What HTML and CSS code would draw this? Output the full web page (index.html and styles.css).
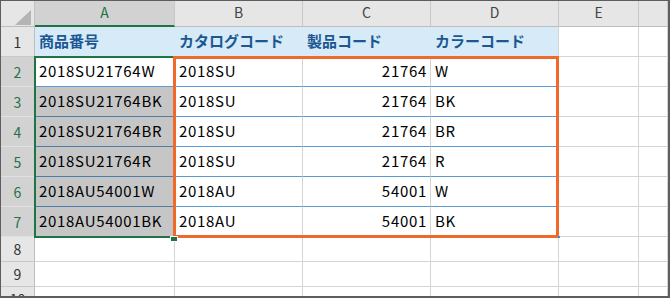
FILE: index.html
```html
<!DOCTYPE html>
<html lang="ja">
<head>
<meta charset="utf-8">
<title>商品番号</title>
<link rel="stylesheet" href="styles.css">
</head>
<body>
<div class="sheet">
  <div class="grid">
    <!-- column headers -->
    <div class="corner">
      <svg class="corner-tri" width="17" height="16" viewBox="0 0 17 16"><polygon points="16,0 16,15 0,15" fill="#b4b4b4"/></svg>
    </div>
    <div class="ch sel">A</div>
    <div class="ch">B</div>
    <div class="ch">C</div>
    <div class="ch">D</div>
    <div class="ch">E</div>
    <div class="ch"></div>

    <!-- row 1: table header -->
    <div class="rh">1</div>
    <div class="cell th">商品番号</div>
    <div class="cell th">カタログコード</div>
    <div class="cell th">製品コード</div>
    <div class="cell th th-end">カラーコード</div>
    <div class="cell"></div>
    <div class="cell"></div>

    <div class="rh sel">2</div>
    <div class="cell tb active">2018SU21764W</div>
    <div class="cell tb">2018SU</div>
    <div class="cell tb num">21764</div>
    <div class="cell tb">W</div>
    <div class="cell"></div>
    <div class="cell"></div>

    <div class="rh sel">3</div>
    <div class="cell tb hl">2018SU21764BK</div>
    <div class="cell tb">2018SU</div>
    <div class="cell tb num">21764</div>
    <div class="cell tb">BK</div>
    <div class="cell"></div>
    <div class="cell"></div>

    <div class="rh sel">4</div>
    <div class="cell tb hl">2018SU21764BR</div>
    <div class="cell tb">2018SU</div>
    <div class="cell tb num">21764</div>
    <div class="cell tb">BR</div>
    <div class="cell"></div>
    <div class="cell"></div>

    <div class="rh sel">5</div>
    <div class="cell tb hl">2018SU21764R</div>
    <div class="cell tb">2018SU</div>
    <div class="cell tb num">21764</div>
    <div class="cell tb">R</div>
    <div class="cell"></div>
    <div class="cell"></div>

    <div class="rh sel">6</div>
    <div class="cell tb hl">2018AU54001W</div>
    <div class="cell tb">2018AU</div>
    <div class="cell tb num">54001</div>
    <div class="cell tb">W</div>
    <div class="cell"></div>
    <div class="cell"></div>

    <div class="rh sel">7</div>
    <div class="cell tb hl">2018AU54001BK</div>
    <div class="cell tb">2018AU</div>
    <div class="cell tb num">54001</div>
    <div class="cell tb">BK</div>
    <div class="cell"></div>
    <div class="cell"></div>

    <div class="rh">8</div>
    <div class="cell"></div><div class="cell"></div><div class="cell"></div><div class="cell"></div><div class="cell"></div><div class="cell"></div>

    <div class="rh">9</div>
    <div class="cell"></div><div class="cell"></div><div class="cell"></div><div class="cell"></div><div class="cell"></div><div class="cell"></div>

    <div class="rh">10</div>
    <div class="cell"></div><div class="cell"></div><div class="cell"></div><div class="cell"></div><div class="cell"></div><div class="cell"></div>
  </div>

  <!-- selection A2:A7 -->
  <div class="selection"></div>
  <!-- highlighted range B2:D7 -->
  <div class="range"></div>
  <div class="fill-handle"></div>
  <div class="resize-dot"></div>
</div>
</body>
</html>
```

FILE: styles.css
```css
html, body {
  margin: 0;
  padding: 0;
  background: #fff;
}

.sheet {
  position: relative;
  width: 670px;
  height: 298px;
  box-sizing: border-box;
  border: 1px solid #5e5e5e;
  border-right-width: 2px;
  border-bottom-width: 2px;
  overflow: hidden;
  background: #fff;
}

.grid {
  display: grid;
  grid-template-columns: 34px 140px 128px 128px 128px 80px 1fr;
  grid-template-rows: 26px repeat(7, 30px) repeat(3, 25px);
  font-family: "Noto Sans CJK JP", "Noto Sans", sans-serif;
  font-size: 15px;
  color: #000;
}

/* header strip */
.corner {
  position: relative;
  box-sizing: border-box;
  background: #e6e6e6;
  border-right: 1px solid #c2c2c2;
  border-bottom: 1px solid #bdbdbd;
}

.corner-tri {
  position: absolute;
  left: 14px;
  top: 9px;
}

.ch {
  box-sizing: border-box;
  display: flex;
  align-items: center;
  justify-content: center;
  padding-bottom: 3px;
  font-size: 14px;
  color: #444;
  background: #e6e6e6;
  border-right: 1px solid #c8c8c8;
  border-bottom: 1px solid #bdbdbd;
}

.ch.sel {
  background: #d2d2d2;
  color: #217346;
  border-bottom: 2px solid #217346;
}

.rh {
  box-sizing: border-box;
  display: flex;
  align-items: center;
  justify-content: center;
  font-size: 14px;
  color: #333;
  background: #e6e6e6;
  border-right: 1px solid #bdbdbd;
  border-bottom: 1px solid #c8c8c8;
}

.rh.sel {
  background: #d2d2d2;
  color: #217346;
  border-right-color: #217346;
  border-bottom-color: #e0e0e0;
}

/* worksheet cells */
.cell {
  box-sizing: border-box;
  display: flex;
  align-items: center;
  padding: 0 4px 2px;
  white-space: nowrap;
  overflow: hidden;
  border-right: 1px solid #d4d4d4;
  border-bottom: 1px solid #d4d4d4;
}

.th {
  background: #d6eaf8;
  color: #1b5892;
  font-weight: bold;
  border-right-color: #d6eaf8;
  padding-bottom: 3px;
}

.th.th-end {
  border-right-color: #d4d4d4;
}

.tb {
  letter-spacing: 0.7px;
  border-bottom-color: #5b9bd5;
}

.tb.hl {
  background: #c6c6c6;
  border-bottom-color: #4d7ca6;
}

.tb.num {
  justify-content: flex-end;
  padding-right: 3px;
}

/* overlays */
.selection {
  position: absolute;
  left: 33px;
  top: 55px;
  width: 141px;
  height: 182px;
  box-sizing: border-box;
  border: 2px solid #217346;
}

.range {
  position: absolute;
  left: 172px;
  top: 55px;
  width: 386px;
  height: 182px;
  box-sizing: border-box;
  border: 3px solid #ef6a2a;
}

.fill-handle {
  position: absolute;
  left: 170px;
  top: 236px;
  width: 6px;
  height: 4px;
  background: #217346;
  box-shadow: 0 0 0 1px #fff;
}

.resize-dot {
  position: absolute;
  left: 557px;
  top: 235px;
  width: 2px;
  height: 2px;
  background: #3c8ddb;
}
```
